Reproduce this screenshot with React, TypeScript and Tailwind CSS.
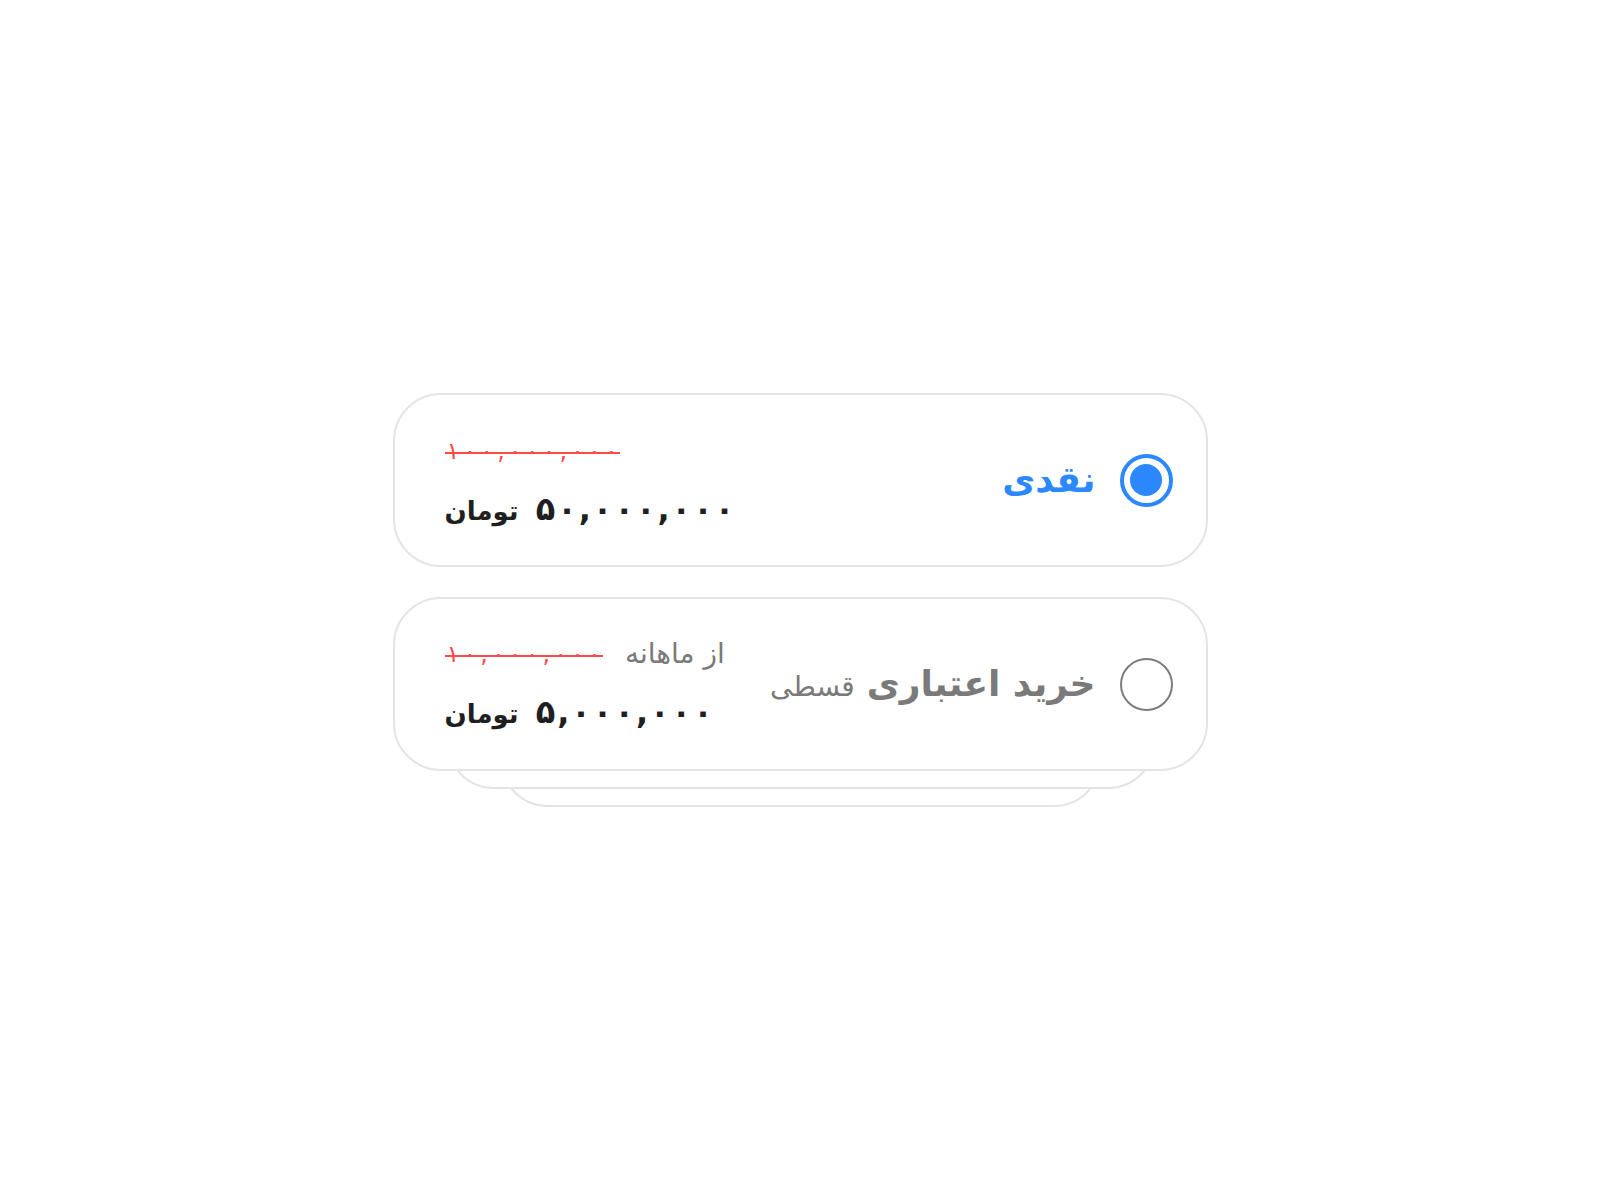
import React from 'react';

// Payment method picker — cash vs. installment, RTL (Persian).

const FONT = { fontFamily: '"DejaVu Sans", "Noto Sans", sans-serif' };

// letter-spacing is ignored for Arabic-script digits, so space each glyph by hand
function Spaced({ text, charClass }: { text: string; charClass: string }) {
  return (
    <span dir="ltr">
      {text.split('').map((c, i) => (
        <span key={i} className={charClass}>
          {c}
        </span>
      ))}
    </span>
  );
}

function Radio({ checked }: { checked: boolean }) {
  return checked ? (
    <span className="w-[53px] h-[53px] shrink-0 rounded-full border-[4px] border-[#2b88ff] flex items-center justify-center">
      <span className="w-[32px] h-[32px] rounded-full bg-[#2b88ff]" />
    </span>
  ) : (
    <span className="w-[53px] h-[53px] shrink-0 rounded-full border-2 border-[#7d7d7d]" />
  );
}

function Price({ amount }: { amount: string }) {
  return (
    <div className="flex items-baseline gap-4 text-[#1f1f1f] font-bold">
      <span className="text-[32px] leading-none">
        <Spaced text={amount} charClass="mx-[1px]" />
      </span>
      <span className="text-[26px] leading-none">تومان</span>
    </div>
  );
}

function Strike({ amount }: { amount: string }) {
  return (
    <span className="relative inline-block text-[24px] leading-none text-[#ff4a4a]">
      <Spaced text={amount} charClass="mx-[2px]" />
      <span className="absolute left-0 right-0 top-[55%] h-[2px] bg-[#ff4a4a]" />
    </span>
  );
}

export default function App() {
  return (
    <div dir="rtl" style={FONT} className="w-full h-[1200px] bg-white flex items-center justify-center">
      <div className="w-[815px] flex flex-col gap-[30px] pb-[36px]">
        {/* cash */}
        <div className="h-[174px] rounded-[48px] border-2 border-[#e4e4e4] bg-white flex items-center justify-between pr-[33px] pl-[50px]">
          <div className="flex items-center gap-6">
            <Radio checked />
            <span className="text-[36px] font-bold text-[#2b88ff] leading-none">نقدی</span>
          </div>
          <div className="flex flex-col items-end gap-[30px] pt-1">
            <Strike amount="۱۰۰,۰۰۰,۰۰۰" />
            <Price amount="۵۰,۰۰۰,۰۰۰" />
          </div>
        </div>

        {/* installment, with stacked layers behind */}
        <div className="relative">
          <div className="absolute left-[107px] right-[106px] top-0 bottom-[-36px] rounded-[48px] border-2 border-[#e4e4e4] bg-white" />
          <div className="absolute left-[53px] right-[52px] top-0 bottom-[-18px] rounded-[48px] border-2 border-[#e4e4e4] bg-white" />
          <div className="relative h-[174px] rounded-[48px] border-2 border-[#e4e4e4] bg-white flex items-center justify-between pr-[33px] pl-[50px]">
            <div className="flex items-center gap-6">
              <Radio checked={false} />
              <div className="flex items-baseline gap-3">
                <span className="text-[36px] font-bold text-[#7a7a7a] leading-none">خرید اعتباری</span>
                <span className="text-[28px] text-[#7a7a7a] leading-none">قسطی</span>
              </div>
            </div>
            <div className="flex flex-col items-end gap-[28px]">
              <div className="flex items-center gap-[22px]">
                <span className="text-[28px] text-[#7a7a7a] leading-none">از ماهانه</span>
                <Strike amount="۱۰,۰۰۰,۰۰۰" />
              </div>
              <Price amount="۵,۰۰۰,۰۰۰" />
            </div>
          </div>
        </div>
      </div>
    </div>
  );
}
